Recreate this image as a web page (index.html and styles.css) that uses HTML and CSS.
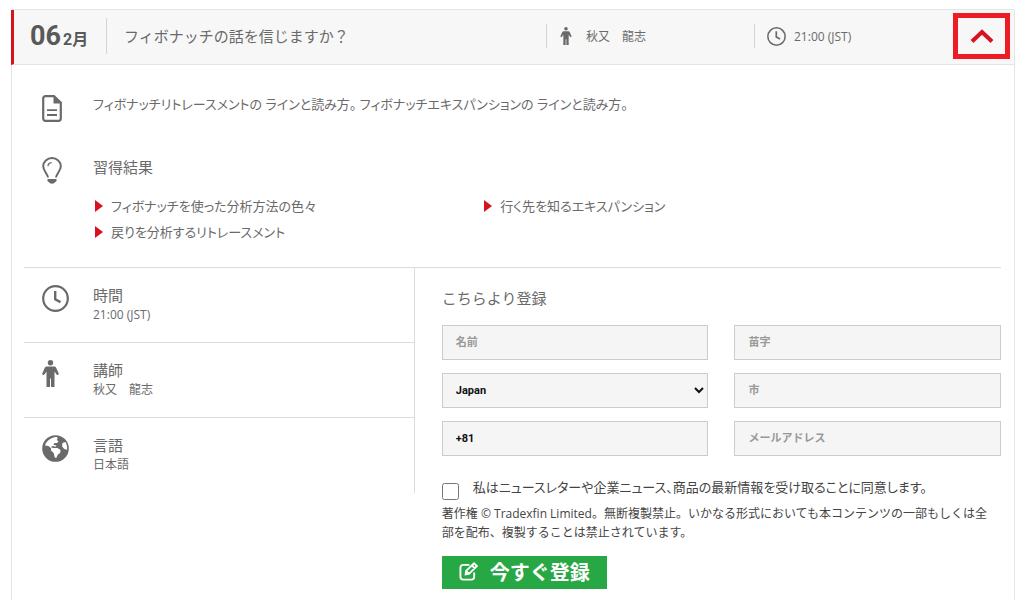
FILE: index.html
```html
<!DOCTYPE html>
<html lang="ja">
<head>
<meta charset="utf-8">
<title>フィボナッチの話を信じますか？</title>
<link rel="stylesheet" href="styles.css">
</head>
<body>
<svg class="defs" aria-hidden="true">
  <symbol id="person" viewBox="0 0 17 27"><circle cx="8.500" cy="2.700" r="2.700"/><path d="M5 6.500h7c1 0 1.700.4 2.200 1.300l2.500 5.600c.5 1.200-1.100 2.400-2.100 1.200L12.500 11.500v15.500H9v-8.500H8V27H4.500V11.500l-2.100 3.100c-1 1.200-2.600 0-2.100-1.200l2.500-5.600C3.300 6.900 4 6.500 5 6.500z"/></symbol>
  <symbol id="clock" viewBox="0 0 27 27"><circle cx="13.500" cy="13.500" r="12.300" fill="none" stroke="currentColor" stroke-width="2.200"/><path d="M13.200 6v8.200l5.300 2.900" fill="none" stroke="currentColor" stroke-width="2.400"/></symbol>
</svg>
<main class="card">
  <header class="card-head">
    <div class="date"><span class="day">06</span><span class="month">2月</span></div>
    <h1 class="title">フィボナッチの話を信じますか？</h1>
    <div class="meta"><svg class="icon-person-sm"><use href="#person"/></svg><span>秋又　龍志</span></div>
    <div class="meta meta-time"><svg class="icon-clock-sm"><use href="#clock"/></svg><span>21:00 (JST)</span></div>
    <button class="toggle" type="button" aria-label="閉じる" aria-expanded="true"><svg class="chevron" viewBox="0 0 24 14"><path d="M2 12.500L12 3l10 9.500"/></svg></button>
  </header>
  <div class="card-body">
    <section class="row summary">
      <svg class="icon-doc" viewBox="0 0 20 27"><path d="M3.500 1.200H12l6.800 6.500v15.800c0 1.400-.9 2.300-2.300 2.300h-13c-1.400 0-2.300-.9-2.300-2.300v-20c0-1.400.9-2.300 2.300-2.300z" fill="none" stroke="currentColor" stroke-width="2.200"/><path d="M11.500 1l7.800 7.500h-7.800z" fill="currentColor"/><path d="M5 15.200h10M5 20h10" stroke="currentColor" stroke-width="1.800"/></svg>
      <p class="text">フィボナッチリトレースメントの ラインと読み方。 フィボナッチエキスパンションの ラインと読み方。</p>
    </section>
    <section class="row results">
      <svg class="icon-bulb" viewBox="0 0 20 27"><path d="M6 20.500c-.3-3.800-4.800-6.500-4.800-11.300a8.800 8.200 0 0 1 17.600 0c0 4.800-4.500 7.500-4.800 11.300" fill="none" stroke="currentColor" stroke-width="2"/><path d="M6 9.300c0-2.200 1.500-3.500 3.600-3.700" fill="none" stroke="currentColor" stroke-width="1.300"/><path d="M5.500 22h9v2L12.300 26q-2.300 1.500-4.600 0l-2.200-2z" fill="currentColor"/></svg>
      <div>
        <h2 class="heading">習得結果</h2>
        <ul class="list">
          <li>フィボナッチを使った分析方法の色々</li>
          <li>行く先を知るエキスパンション</li>
          <li>戻りを分析するリトレースメント</li>
        </ul>
      </div>
    </section>
    <div class="columns">
      <div class="facts">
        <section class="row fact"><svg class="icon-round"><use href="#clock"/></svg><div><h2 class="heading">時間</h2><p class="text">21:00 (JST)</p></div></section>
        <section class="row fact"><svg class="icon-person"><use href="#person"/></svg><div><h2 class="heading">講師</h2><p class="text">秋又　龍志</p></div></section>
        <section class="row fact"><svg class="icon-round" viewBox="0 0 27 27"><circle cx="13.500" cy="13.500" r="13.300" fill="currentColor"/><path class="land" d="M12.500 2.200c2-.4 3 .2 3.200 1l-1 1.800 1.800 1.300-1.300 1.600-2.700.1-1.100 1.700 3 .8-.4 1.200-3.400-.8-1.900 1.300 3 .8 3.700-.1 3.200 2.200-.5 2.800-2.200 1.500-1.800 3.800-1.500-1.100-.9-4-2.800-2.600.2-2.300-2.700-2.200-3.300-.6C3.600 7.200 7.600 3.200 12.500 2.200zM20.400 8l3-1.100c1.800 2.600 2 5.800 1.600 7.800l-2.700-.7-2.200-2.500z"/></svg><div><h2 class="heading">言語</h2><p class="text">日本語</p></div></section>
      </div>
      <form class="form">
        <h2 class="heading">こちらより登録</h2>
        <div class="fields">
          <input class="field" type="text" placeholder="名前" aria-label="名前">
          <input class="field" type="text" placeholder="苗字" aria-label="苗字">
          <select class="field select" aria-label="国"><option>Japan</option></select>
          <input class="field" type="text" placeholder="市" aria-label="市">
          <input class="field" type="tel" value="+81" aria-label="電話番号">
          <input class="field" type="email" placeholder="メールアドレス" aria-label="メールアドレス">
        </div>
        <div class="consent"><input class="check" type="checkbox" id="agree"><label for="agree">私はニュースレターや企業ニュース、商品の最新情報を受け取ることに同意します。</label></div>
        <p class="legal">著作権 © Tradexfin Limited。無断複製禁止。いかなる形式においても本コンテンツの一部もしくは全部を配布、複製することは禁止されています。</p>
        <button class="submit" type="submit"><svg class="icon-edit" viewBox="0 0 20 20"><path d="M11 3H4.500A3 3 0 0 0 1.500 6v9.500a3 3 0 0 0 3 3H13a3 3 0 0 0 3-3V11"/><path d="M7 13l.5-3.600 8.300-8 3 2.900-8.300 8.200zM13.500 3.600l3 3M7.500 9.500l3 3"/></svg><span>今すぐ登録</span></button>
      </form>
    </div>
  </div>
</main>
</body>
</html>
```
FILE: styles.css
```css
* { box-sizing: border-box; }
body {
  margin: 0;
  padding: 9px 9px 0 11px;
  background: #fff;
  color: #6a6a6a;
  font: 12px/19px "Open Sans", "Noto Sans CJK JP", sans-serif;
}
h1, h2, p, ul { margin: 0; padding: 0; font-weight: 400; }
svg { display: block; fill: currentColor; }
.defs { position: absolute; width: 0; height: 0; }
.card {
  min-height: calc(100vh - 9px);
  border: 1px solid #e4e4e4;
  border-bottom: 0;
  border-radius: 2px 2px 0 0;
}
.card-head {
  display: flex;
  align-items: center;
  height: 55px;
  margin-left: -1px;
  padding: 0 4px 2px 0;
  border-left: 3px solid #d8131f;
  border-bottom: 1px solid #e4e4e4;
  background: #f7f7f7;
}
.date {
  display: flex;
  align-items: baseline;
  gap: 2px;
  width: 93px;
  height: 36px;
  padding-left: 16px;
  border-right: 1px solid #d4d4d4;
  color: #58595b;
  font-family: "Roboto", "Noto Sans CJK JP", sans-serif;
  font-weight: 700;
  line-height: 36px;
}
.day { font-size: 27px; }
.month { font-size: 16px; }
.title { flex: 1; padding-left: 17px; font-size: 15px; }
.meta {
  display: flex;
  align-items: center;
  width: 208px;
  height: 24px;
  padding-left: 13px;
  border-left: 1px solid #d4d4d4;
}
.meta-time { width: 199px; padding-left: 12px; gap: 8px; }
.icon-person-sm { width: 12px; height: 18px; margin-right: 14px; }
.icon-clock-sm { width: 19px; height: 19px; }
.toggle {
  display: grid;
  place-items: center;
  width: 57px;
  height: 46px;
  padding: 0;
  border: 5px solid #ed1c24;
  background: #f7f7f7;
}
.chevron { width: 24px; height: 14px; fill: none; stroke: #d8131f; stroke-width: 4; }
.card-body { padding: 30px 13px 0 12px; }
.row { display: grid; grid-template-columns: 51px 1fr; padding-left: 18px; }
.summary { min-height: 62px; }
.icon-doc { width: 20px; height: 27px; }
.icon-bulb { width: 20px; height: 27px; }
.icon-round { width: 27px; height: 27px; }
.icon-person { width: 17px; height: 27px; }
.land { fill: #fff; }
.heading { font-size: 15px; line-height: 20px; }
.list {
  display: grid;
  grid-template-columns: 3fr 4fr;
  padding-top: 16px;
  font-size: 13px;
  font-feature-settings: "palt";
  line-height: 26px;
  list-style: none;
}
.list li { display: flex; align-items: center; gap: 8px; padding-left: 2px; }
.list li::before {
  content: "";
  border: solid transparent;
  border-width: 6px 0 6px 8px;
  border-left-color: #d8131f;
}
.summary .text { font-size: 13px; font-feature-settings: "palt"; }
.columns {
  display: grid;
  grid-template-columns: 2fr 3fr;
  align-items: start;
  margin-top: 22px;
  border-top: 1px solid #dcdcdc;
}
.facts { border-right: 1px solid #dcdcdc; }
.fact { min-height: 75px; padding-top: 17px; border-bottom: 1px solid #dcdcdc; }
.fact:last-child { border-bottom: 0; }
.form { padding: 20px 0 10px 27px; }
.fields {
  display: grid;
  grid-template-columns: 1fr 1fr;
  gap: 13px 26px;
  padding-top: 17px;
}
.field {
  width: 100%;
  min-width: 0;
  height: 35px;
  padding: 0 13px;
  border: 1px solid #ccc;
  border-radius: 0;
  background: #f5f5f5;
  color: #111;
  font: 700 11px "Roboto", "Noto Sans CJK JP", sans-serif;
}
.field::placeholder { color: #999; }
.select { padding: 0 0 0 9px; }
.consent { display: flex; gap: 14px; padding-top: 22px; color: #444; }
.consent label { font-size: 13px; font-feature-settings: "palt"; }
.check { width: 17px; height: 17px; margin: 5px 0 0; }
.legal { padding: 4px 8px 0 0; color: #444; }
.submit {
  display: flex;
  align-items: center;
  gap: 12px;
  height: 33px;
  margin-top: 14px;
  padding: 0 17px 2px;
  border: 0;
  background: #28a745;
  color: #fff;
  font: 700 20px "Noto Sans CJK JP", sans-serif;
}
.icon-edit { width: 19px; height: 19px; fill: none; stroke: #fff; stroke-width: 2; }
```
